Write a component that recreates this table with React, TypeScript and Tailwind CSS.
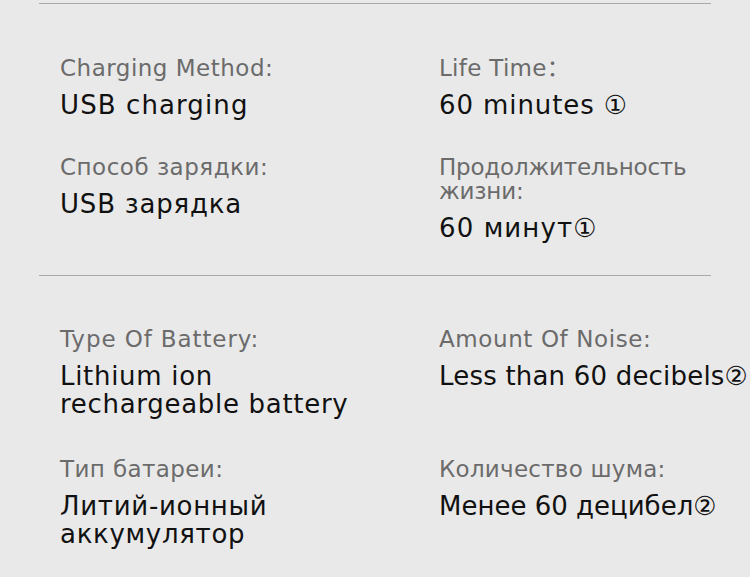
type Spec = { label: string; value: string; lt: string; vt: string };

const specs: { items: Spec[]; gap: string; pad: string }[] = [
  {
    items: [
      { label: "Charging Method:", value: "USB charging", lt: "tracking-[0.5px]", vt: "tracking-[1.1px]" },
      { label: "Life Time：", value: "60 minutes ①", lt: "tracking-[0.3px]", vt: "tracking-[0.9px]" },
      { label: "Способ зарядки:", value: "USB зарядка", lt: "tracking-[0.5px]", vt: "tracking-[0.8px]" },
      { label: "Продолжительность жизни:", value: "60 минут①", lt: "tracking-[-0.2px]", vt: "tracking-[1.1px]" },
    ],
    gap: "gap-y-[36px]",
    pad: "pt-[52px] pb-[33px]",
  },
  {
    items: [
      { label: "Type Of Battery:", value: "Lithium ion rechargeable battery", lt: "tracking-[0.9px]", vt: "tracking-[0.7px]" },
      { label: "Amount Of Noise:", value: "Less than 60 decibels②", lt: "tracking-[0.6px]", vt: "tracking-[0.2px]" },
      { label: "Тип батареи:", value: "Литий-ионный аккумулятор", lt: "tracking-[0.4px]", vt: "tracking-[0.7px]" },
      { label: "Количество шума:", value: "Менее 60 децибел②", lt: "tracking-[0.25px]", vt: "tracking-normal" },
    ],
    gap: "gap-y-[39px]",
    pad: "pt-[51px]",
  },
];

const Item = ({ label, value, lt, vt }: Spec) => (
  <div className="flex flex-col odd:pr-[50px]">
    <p className={`text-[23px] leading-[24px] text-[#6b6b6b] ${lt}`}>{label}</p>
    <p className={`mt-[11px] text-[26px] leading-[28px] text-[#111111] ${vt}`}>{value}</p>
  </div>
);

const App = () => {
  return (
    <div
      className="w-[750px] h-[577px] overflow-hidden bg-[#e9e9e9] pt-[3px]"
      style={{ fontFamily: '"DejaVu Sans", Verdana, "Noto Sans CJK SC", sans-serif' }}
    >
      {specs.map((section, i) => (
        <div key={i}>
          {/* divider */}
          <div className="mx-[39px] w-[672px] h-px bg-[#a8a8a8]" />
          <div className={`grid grid-cols-[379px_1fr] pl-[60px] ${section.gap} ${section.pad}`}>
            {section.items.map((item) => (
              <Item key={item.label} {...item} />
            ))}
          </div>
        </div>
      ))}
    </div>
  );
};

export default App;
